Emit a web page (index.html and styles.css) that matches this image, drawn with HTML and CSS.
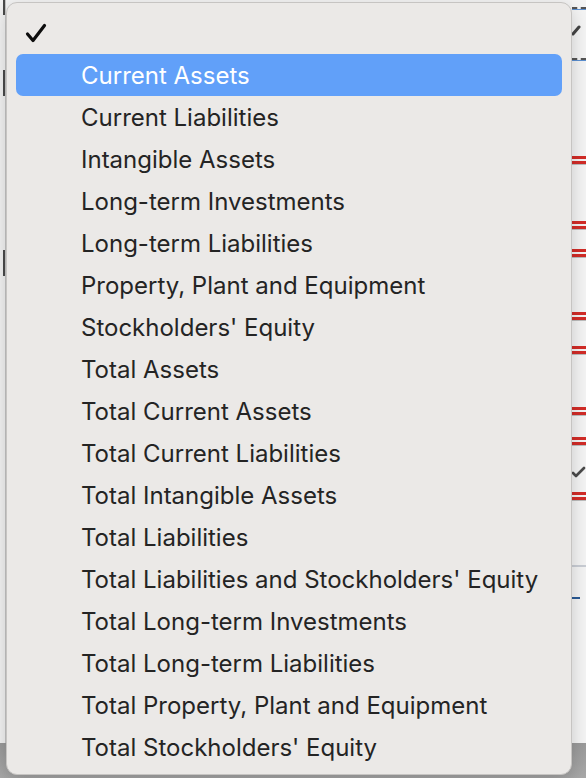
FILE: index.html
```html
<!DOCTYPE html>
<html lang="en">
<head>
    <meta charset="UTF-8">
    <meta name="viewport" content="width=device-width, initial-scale=1.0">
    <title>Account Picker</title>
    <link rel="stylesheet" href="styles.css">
</head>
<body>
    <div class="page">
        <div class="gutter">
            <span class="tick t1"></span>
            <span class="tick t2"></span>
            <span class="tick t3"></span>
        </div>
        <div class="main">
            <div class="rule"></div>
            <div class="link-row"><span class="link"></span></div>
        </div>
        <div class="side">
            <div class="side-head">
                <div class="dash"></div>
                <svg class="pen" width="14" height="48" viewBox="0 0 14 48">
                    <path d="M1 24 L7 17" stroke="#444" stroke-width="3" stroke-linecap="round"/>
                </svg>
                <div class="dash"></div>
            </div>
            <div class="marks">
                <div class="mark" style="margin-top: 95px"></div>
                <div class="mark" style="margin-top: 57px"></div>
                <div class="mark" style="margin-top: 20px"></div>
                <div class="mark" style="margin-top: 55px"></div>
                <div class="mark" style="margin-top: 26px"></div>
                <div class="mark" style="margin-top: 53px"></div>
                <div class="mark" style="margin-top: 22px"></div>
                <svg class="ok" width="14" height="16" viewBox="0 0 14 16">
                    <path d="M1 8 L4 11 L12 3" fill="none" stroke="#4a4a4a" stroke-width="2.6" stroke-linecap="round" stroke-linejoin="round"/>
                </svg>
                <div class="mark" style="margin-top: 11px"></div>
            </div>
            <div class="side-rule"></div>
            <div class="side-link"><span></span></div>
        </div>
        <div class="footer"></div>
    </div>

    <div class="menu">
        <div class="item checked">
            <svg class="check" width="22" height="20" viewBox="0 0 22 20">
                <path d="M2.5 11 L8 17.5 L19.5 2.5" fill="none" stroke="#0d0d0d" stroke-width="3.2" stroke-linecap="round" stroke-linejoin="round"/>
            </svg>
        </div>
        <div class="item active">Current Assets</div>
        <div class="item">Current Liabilities</div>
        <div class="item">Intangible Assets</div>
        <div class="item">Long-term Investments</div>
        <div class="item">Long-term Liabilities</div>
        <div class="item">Property, Plant and Equipment</div>
        <div class="item">Stockholders' Equity</div>
        <div class="item">Total Assets</div>
        <div class="item">Total Current Assets</div>
        <div class="item">Total Current Liabilities</div>
        <div class="item">Total Intangible Assets</div>
        <div class="item">Total Liabilities</div>
        <div class="item">Total Liabilities and Stockholders' Equity</div>
        <div class="item">Total Long-term Investments</div>
        <div class="item">Total Long-term Liabilities</div>
        <div class="item">Total Property, Plant and Equipment</div>
        <div class="item">Total Stockholders' Equity</div>
    </div>
</body>
</html>
```

FILE: styles.css
```css
* {
    margin: 0;
    padding: 0;
    box-sizing: border-box;
}

body {
    font-family: 'Inter', 'Liberation Sans', sans-serif;
    background-color: #f2f2f2;
    width: 586px;
    height: 778px;
    overflow: hidden;
    position: relative;
}

/* Page behind the popup */
.page {
    display: grid;
    grid-template-columns: 6px 1fr 14px;
    grid-template-rows: 743px 35px;
    height: 778px;
}

.gutter {
    border-right: 1px solid #c4c4c4;
    position: relative;
}

.tick {
    position: absolute;
    right: 0;
    width: 2px;
    background-color: #4a4a4a;
}

.t1 { top: 0; height: 15px; }
.t2 { top: 70px; height: 26px; }
.t3 { top: 250px; height: 26px; }

.main {
    display: flex;
    flex-direction: column;
}

.rule {
    margin-top: 578px;
    height: 2px;
    background-color: #c9cdd4;
}

.link-row {
    padding-top: 28px;
}

.link {
    display: block;
    width: 10px;
    height: 2px;
    background-color: #2a5a95;
}

.side {
    display: flex;
    flex-direction: column;
    background-color: #f4f4f4;
}

.side-head {
    display: flex;
    flex-direction: column;
    padding-top: 7px;
}

.dash {
    height: 3px;
    border-top: 2px dashed #555;
    border-bottom: 1px solid #5b8fd0;
}

.pen {
    display: block;
}

.marks {
    display: flex;
    flex-direction: column;
}

.mark {
    height: 8px;
    border-top: 3px solid #d22c27;
    border-bottom: 3px solid #d22c27;
    box-shadow: 0 1px 0 #bdbdbd;
}

.ok {
    display: block;
    margin-top: 20px;
}

.side-rule {
    margin-top: 65px;
    height: 2px;
    background-color: #c9cdd4;
}

.side-link {
    padding-top: 30px;
}

.side-link span {
    display: block;
    width: 8px;
    height: 2px;
    background-color: #2a5a95;
}

.footer {
    grid-column: 1 / 4;
    background: linear-gradient(#9a9a9a, #a8a8a8);
}

/* Popup menu */
.menu {
    position: absolute;
    left: 6px;
    top: 2px;
    width: 566px;
    height: 773px;
    background-color: #ebe9e7;
    border: 1px solid #c6c4c2;
    border-radius: 11px;
    padding: 9px 9px 0;
    box-shadow: 0 6px 18px rgba(0, 0, 0, 0.18);
}

.item {
    height: 42px;
    display: flex;
    align-items: center;
    padding-left: 65px;
    font-size: 24px;
    color: #242424;
    border-radius: 7px;
    white-space: nowrap;
}

.item.checked {
    padding-left: 9px;
}

.item.active {
    background-color: #61a0f9;
    color: #fff;
}
```
